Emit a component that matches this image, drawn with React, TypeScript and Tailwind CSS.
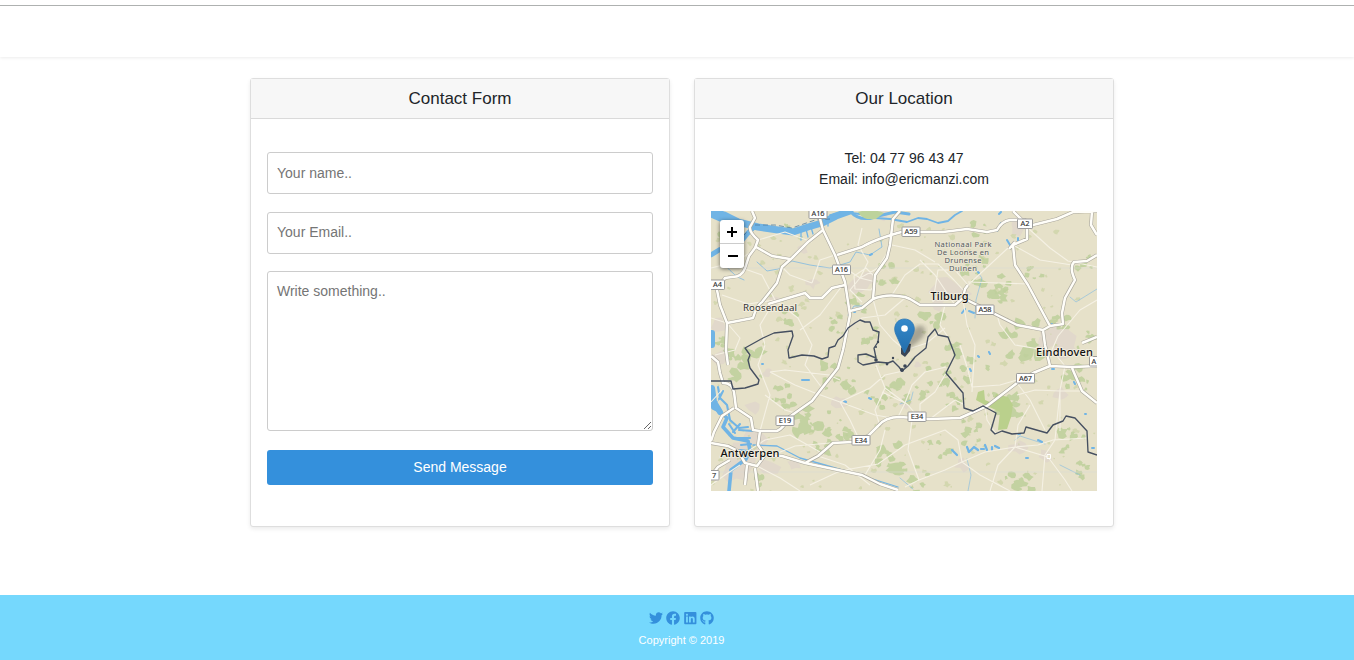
import React from "react";
import { FaFacebook, FaGithub, FaLinkedin, FaTwitter } from "react-icons/fa";

const seeded = (seed: number) => () => {
  seed = (seed * 1664525 + 1013904223) % 4294967296;
  return seed / 4294967296;
};

const blob = (x: number, y: number, r: number, rnd: () => number) => {
  const pts: string[] = [];
  const n = 9;
  for (let i = 0; i < n; i++) {
    const a = (i / n) * Math.PI * 2;
    const d = r * (0.45 + rnd() * 0.75);
    pts.push(`${(x + Math.cos(a) * d * 1.2).toFixed(1)} ${(y + Math.sin(a) * d).toFixed(1)}`);
  }
  return `M${pts.join("L")}Z`;
};

// x, y, radius, count: clusters of woodland
const woods = [
  [745, 365, 16, 14], [722, 342, 7, 5], [790, 320, 9, 6], [788, 227, 4, 3], [885, 275, 10, 6],
  [857, 303, 9, 7], [970, 270, 14, 8], [997, 288, 16, 10], [1035, 273, 8, 5], [1020, 340, 18, 12],
  [935, 325, 13, 9], [957, 350, 9, 8], [940, 375, 12, 9], [925, 392, 9, 6], [1006, 405, 13, 14],
  [1077, 378, 12, 10], [1058, 320, 10, 6], [1085, 340, 9, 5], [800, 420, 17, 14], [840, 378, 15, 11],
  [842, 425, 14, 9], [890, 458, 14, 12], [872, 400, 10, 6], [780, 392, 9, 7], [1020, 478, 14, 10],
  [975, 430, 14, 7], [940, 450, 12, 7], [1070, 440, 14, 9], [760, 482, 8, 5], [820, 448, 10, 6],
  [920, 480, 15, 8], [1085, 470, 8, 6], [975, 370, 12, 6], [870, 335, 8, 6], [895, 390, 13, 7],
  [725, 240, 7, 4], [840, 325, 9, 5], [1085, 262, 8, 5], [980, 230, 8, 4], [955, 402, 9, 6],
];

const rnd = seeded(77);
const woodPath = woods
  .map(([x, y, r, n]) =>
    Array.from({ length: n }, () =>
      blob(x + (rnd() - 0.5) * r * 2.1, y + (rnd() - 0.5) * r * 1.9, 1.5 + rnd() * r * 0.3, rnd)
    ).join("")
  )
  .join("");
const scatterPath = Array.from({ length: 210 }, () =>
  blob(711 + rnd() * 386, 225 + rnd() * 266, 0.8 + rnd() * 2.4, rnd)
).join("");
const townPath = [
  [775, 300, 7], [860, 283, 12], [868, 276, 8], [945, 287, 14], [958, 294, 10], [938, 304, 7],
  [1018, 226, 9], [1058, 336, 15], [1068, 350, 12], [1045, 345, 9], [742, 455, 19], [755, 440, 12],
  [768, 467, 10], [735, 472, 12], [754, 408, 8], [905, 403, 7], [1018, 448, 8], [1045, 455, 7],
  [962, 465, 7], [812, 283, 6], [720, 325, 8], [722, 358, 8], [840, 402, 7], [1060, 395, 7],
  [883, 216, 5], [768, 372, 5], [795, 464, 6], [918, 365, 4], [960, 247, 5], [803, 249, 5],
].map(([x, y, r]) => blob(x, y, r, rnd)).join("");

const minorRoads = [
  "M711 268L735 262L758 248M758 240L785 232L812 242M775 300L762 275L742 268M775 300L748 304L722 295M775 300L798 318L812 345L805 365L822 388",
  "M775 300L760 325L765 345L758 365L770 395L760 431M812 283L820 260L835 255M812 283L790 275L782 267M845 282L820 315L800 330",
  "M860 278L845 268M860 278L878 268L892 245L915 250L935 262M860 278L868 262L858 245L862 228M860 278L850 290L862 302M860 278L876 282L871 290L855 289L854 276L866 268L874 276",
  "M873 299L880 325L893 340L905 350L927 343L945 328M845 330L862 318L885 315L905 298M892 295L905 275L920 264L938 264L954 280L965 292",
  "M920 260L935 275L945 290L955 305M933 302L938 270L955 270L968 285M968 285L1008 248L1013 245M968 282L1000 283L1028 284M945 305L940 325L948 337M963 300L967 325L975 345L973 375L972 392",
  "M1013 245L1040 260L1072 265M1028 228L1050 248L1068 261L1097 267M1058 336L1080 310L1097 300M1058 336L1052 350L1065 366L1060 390L1060 431M1045 350L1015 345L1000 325L997 315",
  "M960 345L968 370L972 387L1000 385L1017 380M1017 383L1030 400L1045 430M1017 395L1035 390L1060 391L1082 391M1060 391L1055 440L1045 455L1042 491M996 434L987 420L985 405",
  "M919 480L945 470L962 462L985 452L1015 447L1048 457M919 480L908 450L912 420M919 480L905 487M962 462L958 440L945 430L905 445L878 464L845 470M962 462L980 475L1010 491M1015 447L1018 425L1030 405M1015 447L998 465L990 491M1015 447L1038 445L1053 440L1087 438M1048 457L1065 480L1072 491",
  "M711 318L727 323L740 338L735 350L715 355M722 390L711 402M770 372L785 370L829 375L840 380M765 395L785 410L795 413M840 402L815 393L795 385L770 372M840 402L870 388L885 375L903 371M840 402L850 420L858 437M840 402L875 415L892 418M885 388L908 405L920 419M885 388L875 410L880 426",
  "M742 455L765 440L790 435L820 452M757 466L780 478L800 491M768 457L795 446L830 443M818 456L845 465L870 485M905 403L912 385L925 372L946 367M905 403L898 417M905 403L882 392M946 373L935 392L920 404L920 419M865 475L880 450L885 430M930 419L955 400L965 405M876 365L885 388M810 485L840 471M740 465L725 475L711 485",
].join("");

const majorRoads = [
  "M752 211L755 218L750 227Q749 232 758 240L755 248L749 256L745 268Q742 277 732 277L725 278L717 290L720 305L727 323L726 350L728 365",
  "M711 356L718 362L720 373L723 383Q732 383 734 392L736 408L751 418L753 430L760 431L777 431Q784 428 788 418L795 413L812 401L822 388L838 368L843 350L850 315L845 282L835 255L823 230L818 211",
  "M756 247L772 256L790 259M727 323L753 318Q757 305 762 302L777 283L782 267L792 258L808 242L823 230",
  "M768 304L805 293L810 298L822 298L832 288L845 285",
  "M837 255L862 247Q875 239 905 231L922 232L943 232L967 229L987 232L997 230Q1002 221 1010 220L1025 220L1033 225L1057 219L1073 212L1097 211",
  "M900 211L893 219L890 245L887 258L875 275L873 299M850 311L862 308L873 299Q887 293 905 297L910 299L920 305L955 305L963 298L965 289L968 285",
  "M963 298L977 305L997 315L1017 325L1043 330L1050 326L1063 324L1062 313L1065 298L1075 280Q1069 267 1074 262L1087 261L1097 255",
  "M1050 326L1028 285L1015 265L1013 245L1027 239L1027 225L1013 211M1009 249L1015 242M1043 330L1045 345L1050 366M1092 211L1091 225L1097 235M1082 343L1097 337",
  "M1097 366L1073 367L1050 366L1033 373L1017 383L987 406L960 418L930 419L900 417Q885 417 878 426L868 436L852 442L833 443L818 456L805 463L782 456L765 455M805 463L838 470L862 475L880 484L898 490M1072 368L1082 391L1097 403",
  "M760 431L758 445L765 455L757 466L745 463L738 451L728 446L711 443M747 465L745 485M755 468L758 491M730 460L718 467L711 476M734 408L722 416L714 432L711 441",
].join("");

const border =
  "M711 381L731 381L733 389L745 388L758 384L759 380L750 368L748 360L750 355L745 348L763 338L774 333L792 331L793 336L788 350L789 358L802 355L814 356L822 359L828 357L829 348L835 346L838 340L843 336L848 328L855 323L860 320L865 322L870 322L873 330L879 332L878 342L874 348L876 358L866 354L858 355L858 362L863 365L878 362L888 363L893 361L899 367L902 371L908 366L915 357L926 348L928 337L935 329L938 335L948 337L955 355L946 373L963 393L964 408L973 411L983 406L996 413L991 430L995 434L1002 431L1012 434L1024 433L1026 427L1047 433L1053 425L1063 421L1066 416L1075 418L1087 431L1088 452L1097 455";

type LabelProps = { x: number; y: number; text: string; w?: number };

function Shield({ x, y, text, w = 18 }: LabelProps) {
  return (
    <g>
      <rect x={x - w / 2} y={y - 4.5} width={w} height="9.5" rx="0.7" fill="#fff" stroke="#929292" strokeWidth="0.9" />
      <text x={x} y={y + 2.8} textAnchor="middle" fontSize="7.4" fill="#333" stroke="#333" strokeWidth="0.15">{text}</text>
    </g>
  );
}

function Place({ x, y, text, size, width, bold }: { x: number; y: number; text: string; size: number; width: number; bold?: boolean }) {
  return (
    <text
      x={x}
      y={y}
      fontSize={size}
      textLength={width}
      fill={bold ? "#111" : "#333"}
      fontWeight={bold ? 500 : 400}
      stroke="#f5f1e3"
      strokeOpacity="0.8"
      strokeWidth="2"
      paintOrder="stroke"
    >
      {text}
    </text>
  );
}

function LocationMap() {
  return (
    <div className="relative h-[280px] w-[386px] overflow-hidden bg-[#e6e1c9]">
      <svg viewBox="711 211 386 280" className="block h-[280px] w-[386px] font-['Noto_Sans',sans-serif]" strokeLinejoin="round">
        <defs>
          <linearGradient id="pin" x1="0" y1="0" x2="0" y2="1">
            <stop offset="0" stopColor="#3589cb" />
            <stop offset="1" stopColor="#216dab" />
          </linearGradient>
          <filter id="soft"><feGaussianBlur stdDeviation="2" /></filter>
        </defs>
        <rect x="711" y="211" width="386" height="280" fill="#e6e1c9" />
        <path d={townPath} fill="#e1d8cb" />
        <path d={scatterPath} fill="#ccd3a6" opacity="0.75" />
        <path d={woodPath} fill="#bccf9a" opacity="0.85" />
        <path d="M978 392L984 390L985 400L992 403L996 394L1008 397L1013 405L1011 417L1007 429L998 430L1000 412L985 405L976 400Z" fill="#bad08c" />

        <g fill="none" stroke="#70b4e5" strokeLinecap="round">
          <path d="M711 214L725 220L742 223L758 227L778 230L793 232L808 227L822 223L836 216L850 211" strokeWidth="7" />
          <path d="M711 211L724 215L738 222" strokeWidth="7" />
          <path d="M711 255L719 250L738 245L748 233L755 226" strokeWidth="5" />
          <path d="M830 215L842 212L860 214L875 218L890 219L907 222L918 218L927 219L938 223L948 221L955 215L962 211" strokeWidth="1.8" />
          <path d="M850 211Q860 223 878 216L895 212L909 214" strokeWidth="3" />
          <path d="M801 230V240M806 229L808 237M811 227L813 234M828 221V226" strokeWidth="1.3" />
          <path d="M711 394L713 408L719 411L727 418L723 427L733 438L748 441L750 450L746 459L731 470L729 491" strokeWidth="3.6" />
          <path d="M712 388L714 402L720 412" strokeWidth="6" />
          <path d="M718 387L720 398L727 405L730 420L739 428L748 427M719 399L723 391M733 432L740 424M735 438L750 438M739 430L753 431M729 424L735 433M741 445L751 444M748 451L740 450" strokeWidth="2.1" />
          <path d="M712 333V345" strokeWidth="6" />
          <path d="M753 445L777 446L800 458L825 465L860 475L898 487" strokeWidth="1.3" />
          <path d="M725 265Q735 277 744 280M757 262L767 271L778 269L792 261L810 265L830 268L850 262L856 252L870 255L882 247L879 229M848 315L854 306L863 306" strokeWidth="1" opacity="0.7" />
          <path d="M973 266L982 278L976 300L975 318M1097 289L1076 302L1070 297M711 408L719 400M900 404L911 400L913 392M967 459L971 475L968 491M1015 440L1020 436L1045 444M1060 465L1080 475M900 478L913 489" strokeWidth="0.8" opacity="0.65" />
          <path d="M952 450L957 455M967 447L969 452L974 447L978 450M981 449H984M985 445L987 450M992 447V450M995 446L999 448" strokeWidth="2.2" />
          <path d="M997 231L1001 223M999 214L1001 212M1007 240L1010 245M1018 238V241M978 272L979 273M962 313L965 309M969 311L974 313M762 364H763M844 401L846 402M869 398L871 399M854 312H855M802 380L809 380M989 352L990 354M1074 382L1075 384M1085 414H1086M1038 440L1042 442M1018 434H1020M1026 458H1028M1092 448H1094M1052 324L1053 326M870 255L872 254M970 369L971 371M978 356L979 357M1052 369H1054" strokeWidth="2" />
        </g>
        <path d="M755 225L775 225L792 228L815 220L830 219M743 236L753 226" fill="none" stroke="#4f7da4" strokeWidth="0.8" strokeDasharray="5 3" />
        <path d="M858 212Q872 208 884 213L876 219Q863 221 858 212Z" fill="#bdd39b" />

        <path d="M711 268H1097M711 472H1097" stroke="#dadad5" strokeWidth="0.6" />
        <path d={minorRoads} fill="none" stroke="#f5f1e4" strokeWidth="1.1" />
        <path d={majorRoads} fill="none" stroke="#aaa79d" strokeWidth="3.7" />
        <path d={majorRoads} fill="none" stroke="#fffef9" strokeWidth="2.5" />
        <path d="M1047 454.500h3.500v4h-3.500z" fill="#e6e1c9" stroke="#fff" />

        <path d={border} fill="none" stroke="#454f60" strokeWidth="1.35" />
        <path d="M901 348L906 343L911 344L910 351L905 357L901 354Z" fill="#3b4656" />
        <g fill="#3b4656">
          <circle cx="878" cy="342" r="1.2" /><circle cx="876" cy="360" r="1.8" /><circle cx="893" cy="358" r="1.2" />
          <circle cx="905" cy="366" r="1.8" /><circle cx="902" cy="370" r="2" /><circle cx="887" cy="364" r="1.4" /><circle cx="876" cy="347" r="1" />
        </g>

        <Shield x={818} y={213.500} text="A16" />
        <Shield x={841.5} y={269.500} text="A16" />
        <Shield x={911} y={231.500} text="A59" />
        <Shield x={1025} y={223.500} text="A2" w={15} />
        <Shield x={985} y={309.500} text="A58" />
        <Shield x={1025.500} y={378} text="A67" />
        <Shield x={785} y={420.500} text="E19" />
        <Shield x={861} y={440} text="E34" />
        <Shield x={917} y={416.500} text="E34" />
        <Shield x={717.500} y={284.500} text="A4" w={14} />
        <Shield x={1096} y={361} text="A1" w={13} />
        <Shield x={714} y={475} text="7" w={10} />

        <Place x={743} y={311} text="Roosendaal" size={9.7} width={54} />
        <Place x={930.500} y={299.500} text="Tilburg" size={11} width={38} bold />
        <Place x={1036} y={355.500} text="Eindhoven" size={11} width={57} bold />
        <Place x={720.500} y={456.800} text="Antwerpen" size={11} width={59} bold />
        <g fontSize="7.6" fill="#555a5d" stroke="#ebe7d6" strokeWidth="1.5" paintOrder="stroke" textAnchor="middle">
          <text x="963" y="247" textLength="57">Nationaal Park</text>
          <text x="963" y="255" textLength="52">De Loonse en</text>
          <text x="963" y="262.500" textLength="37">Drunense</text>
          <text x="963" y="270.500" textLength="28">Duinen</text>
        </g>

        <path d="M905 350L909 334Q920 320 925 329Q927 337 911 347Z" fill="#222" opacity="0.32" filter="url(#soft)" />
        <path d="M904.500 353L896.800 336.500C895.500 333.800 894.700 331.600 894.700 329C894.700 323.100 898.900 319 904.500 319C910.100 319 914.300 323.100 914.300 329C914.300 331.600 913.500 333.800 912.200 336.500Z" fill="url(#pin)" stroke="#2c76b4" strokeWidth="0.8" />
        <circle cx="904.500" cy="328.500" r="3.300" fill="#fff" />
      </svg>
      <div className="absolute left-[9px] top-[9px] flex w-6 flex-col overflow-hidden rounded-[3px] bg-white shadow-[0_1px_4px_rgba(0,0,0,0.55)]">
        <button aria-label="Zoom in" className="flex h-6 items-center justify-center border-b border-[#ccc]">
          <svg viewBox="0 0 10 10" className="size-2.5"><path d="M0 5h10M5 0v10" stroke="#000" strokeWidth="2" /></svg>
        </button>
        <button aria-label="Zoom out" className="flex h-6 items-center justify-center pl-0.5">
          <svg viewBox="0 0 10 10" className="size-2.5"><path d="M0 5h10" stroke="#000" strokeWidth="2" /></svg>
        </button>
      </div>
    </div>
  );
}

function Card({ title, children }: { title: string; children: React.ReactNode }) {
  return (
    <section className="h-[449px] w-[420px] rounded-[3px] border border-[#dedede] bg-white shadow-[0_2px_4px_rgba(0,0,0,0.08)]">
      <h2 className="flex h-10 items-center justify-center border-b border-[#dadada] bg-[#f7f7f7] text-[17px] text-[#212529]">{title}</h2>
      <div className="px-4">{children}</div>
    </section>
  );
}

export default function App() {
  return (
    <div className="flex h-[660px] flex-col overflow-hidden bg-white font-['Liberation_Sans',Arial,sans-serif] text-[14px] text-[#212529]">
      <header className="h-[57px] shrink-0 pt-[5px] shadow-[0_1px_3px_rgba(0,0,0,0.08)]">
        <div className="h-px bg-[#aeb1b0]" />
      </header>
      <main className="ml-[250px] mt-[21px] flex gap-6">
        <Card title="Contact Form">
          <form className="flex flex-col pt-[33px]" onSubmit={(e) => e.preventDefault()}>
            <input placeholder="Your name.." className="h-[42px] rounded-[3px] border border-[#ccc] px-[9px] placeholder:text-[#757575]" />
            <input placeholder="Your Email.." className="mt-[18px] h-[42px] rounded-[3px] border border-[#ccc] px-[9px] pb-0.5 placeholder:text-[#757575]" />
            <textarea placeholder="Write something.." className="mt-[17px] h-40 resize-y rounded-[3px] border border-[#ccc] px-[9px] py-[9px] leading-5 placeholder:text-[#757575]" />
            <button className="mt-[19px] h-[35px] rounded-[3px] bg-[#3490dc] text-white">Send Message</button>
          </form>
        </Card>
        <Card title="Our Location">
          <p className="pb-[21px] pt-[29px] text-center leading-[21px]">
            Tel: 04 77 96 43 47
            <br />
            Email: info@ericmanzi.com
          </p>
          <LocationMap />
        </Card>
      </main>
      <footer className="mt-auto flex h-[65px] flex-col items-center bg-[#75d8fd] pl-[9px] pt-4">
        <div className="flex h-[14px] items-center gap-[3.500px] text-[14px] text-[#3490dc]">
          <FaTwitter />
          <FaFacebook />
          <FaLinkedin className="w-[12.600px]" />
          <FaGithub />
        </div>
        <p className="mt-2 text-[11px] leading-[14px] text-white">Copyright © 2019</p>
      </footer>
    </div>
  );
}
